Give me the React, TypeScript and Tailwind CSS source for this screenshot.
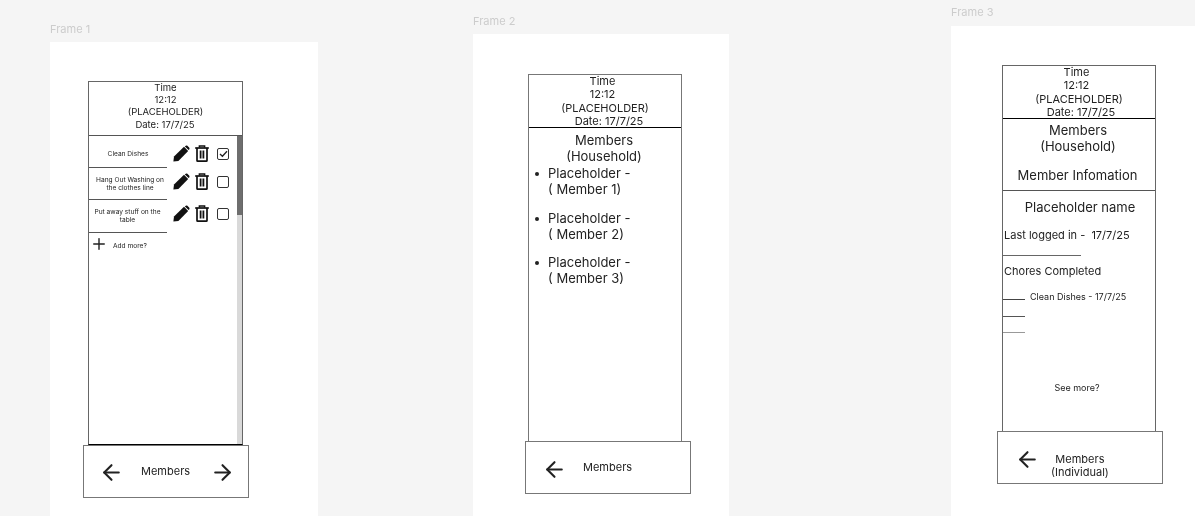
import React from "react";
import { ArrowLeft, ArrowRight, Plus } from "lucide-react";

const font = { fontFamily: "Inter, 'Liberation Sans', sans-serif" };

function Pencil() {
  return (
    <svg width="17" height="17" viewBox="0 0 17 17" className="shrink-0">
      <path d="M0.4 16.6 L1 11.4 L11 1.8 L15.2 6 L5.4 15.9 Z" fill="#111111" />
      <path d="M12.3 1 C13 0.3 13.9 0.3 14.6 0.9 L16.1 2.4 C16.7 3.1 16.7 4 16 4.7 L15.6 5.1 L11.9 1.4 Z" fill="#111111" />
    </svg>
  );
}

function Trash() {
  return (
    <svg width="14" height="17" viewBox="0 0 14 17" fill="none" stroke="#111111" className="shrink-0">
      <path d="M0.2 3 H13.8" strokeWidth="1.7" />
      <path d="M4.4 2.6 V0.9 H9.6 V2.6" strokeWidth="1.5" />
      <path d="M2 3 V15.4 C2 15.8 2.3 16.1 2.7 16.1 H11.3 C11.7 16.1 12 15.8 12 15.4 V3" strokeWidth="1.7" />
      <path d="M5.6 5.6 V13.6 M8.4 5.6 V13.6" strokeWidth="1.8" />
    </svg>
  );
}

function Check({ checked }: { checked?: boolean }) {
  return (
    <div className="flex h-[12px] w-[12px] shrink-0 items-center justify-center rounded-[2px] border border-[#333333]">
      {checked && (
        <svg width="9" height="8" viewBox="0 0 9 8" fill="none" stroke="#222222" strokeWidth="1.3">
          <path d="M1 4 L3.4 6.3 L8 1.2" />
        </svg>
      )}
    </div>
  );
}

function Row({ lines, checked, h, pl, ic }: { lines: React.ReactNode; checked?: boolean; h: string; pl: string; ic: string }) {
  return (
    <div className={`flex items-start ${h}`}>
      <div className={`flex h-full w-[78px] shrink-0 items-center border-b border-[#555555] text-center text-[6.6px] leading-[8.5px] text-[#222222] ${pl}`}>
        {lines}
      </div>
      <div className={`ml-[6px] flex items-center ${ic}`}>
        <Pencil />
        <div className="ml-[5px]"><Trash /></div>
        <div className="ml-[8px]"><Check checked={checked} /></div>
      </div>
    </div>
  );
}

function Label({ children, cls }: { children: React.ReactNode; cls: string }) {
  return <div className={`text-[11px] leading-[14px] text-[#cccccc] ${cls}`}>{children}</div>;
}

function Bar({ children, right, textClass, arrowClass }: { children: React.ReactNode; right?: boolean; textClass: string; arrowClass: string }) {
  return (
    <div className="flex h-[53px] w-[166px] items-center border border-[#777777] bg-white pl-[16px] pr-[13px] text-[#222222]">
      <ArrowLeft size={25} strokeWidth={2} className={`shrink-0 ${arrowClass}`} color="#222222" />
      <div className={`text-center text-[11px] leading-[13px] ${textClass}`}>{children}</div>
      {right && <ArrowRight size={25} strokeWidth={2} className="ml-auto mt-[2px] shrink-0" color="#222222" />}
    </div>
  );
}

function Header({ dateClass }: { dateClass: string }) {
  return (
    <div className="h-[53px] shrink-0 border-b border-black text-[11px] leading-[13.3px] text-[#222222]">
      <div className="pr-[5px] text-center">Time</div>
      <div className="pr-[5px] text-center">12:12</div>
      <div className="text-center">(PLACEHOLDER)</div>
      <div className={`text-center ${dateClass}`}>Date: 17/7/25</div>
    </div>
  );
}

function Member({ n, mt }: { n: number; mt: string }) {
  return (
    <div className={`flex pl-[6px] text-[13px] leading-[16px] text-[#222222] ${mt}`}>
      <div className="mr-[9px] mt-[7px] h-[4px] w-[4px] shrink-0 rounded-full bg-[#222222]" />
      <div>
        <div>Placeholder -</div>
        <div>( Member {n})</div>
      </div>
    </div>
  );
}

export default function App() {
  return (
    <div className="relative h-[516px] w-[1195px] overflow-hidden bg-[#f5f5f5]" style={font}>
      {/* Frame 1 */}
      <div className="absolute left-[50px] top-[22px] flex h-[494px] w-[268px] flex-col will-change-transform">
        <Label cls="h-[20px]">Frame 1</Label>
        <div className="flex-1 bg-white pl-[33px] pt-[39px]">
          <div className="ml-[5px] flex h-[364px] w-[155px] flex-col border border-[#666666] border-b-black">
            <div className="h-[54px] shrink-0 border-b border-[#555555] text-[9.5px] leading-[12.2px] text-[#222222]">
              <div className="text-center">Time</div>
              <div className="text-center">12:12</div>
              <div className="text-center">(PLACEHOLDER)</div>
              <div className="pr-[1px] text-center">Date: 17/7/25</div>
            </div>
            <div className="flex flex-1">
              <div className="flex-1">
                <Row h="h-[32px]" pl="justify-center pt-[5px]" ic="mt-[9px]" checked lines={<span>Clean Dishes</span>} />
                <Row h="h-[32px]" pl="justify-center pt-[1px]" ic="mt-[5px]" lines={<span className="pl-[4px]">Hang Out Washing on<br />the clothes line</span>} />
                <Row h="h-[33px]" pl="justify-center" ic="mt-[5px]" lines={<span className="pr-[1px]">Put away stuff on the<br />table</span>} />
                <div className="flex items-center pl-[1px] pt-[2px] text-[6.6px] text-[#222222]">
                  <Plus size={18} strokeWidth={1.9} color="#222222" />
                  <span className="ml-[5px] mt-[6px]">Add more?</span>
                </div>
              </div>
              <div className="flex w-[5px] shrink-0 flex-col bg-[#d9d9d9]">
                <div className="h-[79px] bg-[#6e6e6e]" />
              </div>
            </div>
          </div>
          <Bar right arrowClass="mt-[2px] -ml-[1px]" textClass="ml-[17px]">Members</Bar>
        </div>
      </div>

      {/* Frame 2 */}
      <div className="absolute left-[473px] top-[14px] flex h-[502px] w-[256px] flex-col will-change-transform">
        <Label cls="h-[20px]">Frame 2</Label>
        <div className="flex-1 bg-white pl-[52px] pt-[40px]">
          <div className="ml-[3px] flex h-[367px] w-[154px] flex-col border border-[#777777] border-b-0">
            <Header dateClass="pl-[8px]" />
            <div className="pt-[4px] text-center text-[13px] leading-[16px] text-[#222222]">
              <div className="pr-[2px]">Members</div>
              <div className="pr-[2px]">(Household)</div>
            </div>
            <Member n={1} mt="mt-[1px]" />
            <Member n={2} mt="mt-[13px]" />
            <Member n={3} mt="mt-[12px]" />
          </div>
          <Bar arrowClass="mt-[3px]" textClass="ml-[16px]">Members</Bar>
        </div>
      </div>

      {/* Frame 3 */}
      <div className="absolute left-[951px] top-[5px] flex h-[511px] w-[244px] flex-col will-change-transform">
        <Label cls="h-[21px]">Frame 3</Label>
        <div className="flex-1 bg-white pl-[46px] pt-[39px]">
          <div className="ml-[5px] flex h-[366px] w-[154px] flex-col border border-[#666666] border-b-0 text-[#222222]">
            <Header dateClass="pl-[4px]" />
            <div className="h-[72px] shrink-0 border-b border-[#555555] pt-[3px] text-center text-[13px] leading-[16px]">
              <div className="pr-[2px]">Members</div>
              <div className="pr-[2px]">(Household)</div>
              <div className="mt-[13px] pr-[3px]">Member Infomation</div>
            </div>
            <div className="pt-[8px] text-center text-[13px] leading-[16px]">
              <div className="pl-[2px]">Placeholder name</div>
            </div>
            <div className="mt-[14px] pl-[1px] text-[11px] leading-[13px]">Last logged in -&nbsp; 17/7/25</div>
            <div className="mt-[13px] w-[78px] border-b border-[#666666]" />
            <div className="mt-[9px] pl-[1px] text-[11px] leading-[13px]">Chores Completed</div>
            <div className="mt-[14px] flex h-[14px]">
              <div className="mt-[7px] h-[1px] w-[22px] bg-[#444444]" />
              <div className="ml-[5px] text-[9px] leading-[10px]">Clean Dishes - 17/7/25</div>
            </div>
            <div className="mt-[10px] h-[1px] w-[22px] bg-[#555555]" />
            <div className="mt-[15px] h-[1px] w-[22px] bg-[#999999]" />
            <div className="mt-[49px] pr-[4px] text-center text-[9px] leading-[11px]">See more?</div>
          </div>
          <Bar arrowClass="mt-[3px] ml-[1px]" textClass="ml-[11px] mt-[16px]">
            <div>Members</div>
            <div>(Individual)</div>
          </Bar>
        </div>
      </div>
    </div>
  );
}
